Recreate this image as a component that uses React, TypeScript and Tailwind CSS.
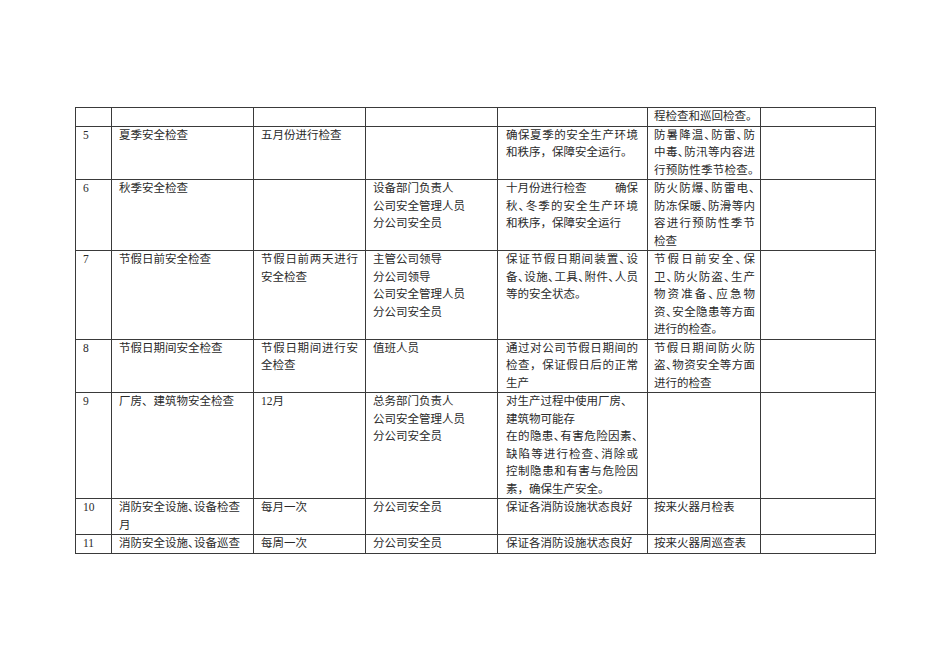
import React from "react";

type Line = { t: string; j?: boolean; split?: [string, string]; nc?: boolean };
type Cell = Line[];

function Chars({ t, compress }: { t: string; compress: boolean }) {
  return (
    <>
      {[...t].map((c, i) =>
        compress && c === "、" ? (
          <span key={i} className="tracking-[-5.5px]">
            {c}
          </span>
        ) : compress && c === "。" ? (
          <span key={i} className="tracking-[-4.5px]">
            {c}
          </span>
        ) : (
          <span key={i}>{c}</span>
        )
      )}
    </>
  );
}

function LineView({ l }: { l: Line }) {
  if (l.split) {
    return (
      <div className="flex justify-between whitespace-nowrap">
        <span>{l.split[0]}</span>
        <span>{l.split[1]}</span>
      </div>
    );
  }
  if (l.j) {
    return (
      <div className="flex justify-between whitespace-nowrap">
        <Chars t={l.t} compress={true} />
      </div>
    );
  }
  return (
    <div className="whitespace-nowrap">
      <Chars t={l.t} compress={!l.nc} />
    </div>
  );
}

const L = (t: string): Line => ({ t });
const J = (t: string): Line => ({ t, j: true });

type Row = Cell[];

const rows: Row[] = [
  [[], [], [], [], [], [L("程检查和巡回检查。")], []],
  [
    [L("5")],
    [L("夏季安全检查")],
    [L("五月份进行检查")],
    [],
    [J("确保夏季的安全生产环境"), { t: "和秩序，保障安全运行。", nc: true }],
    [J("防暑降温、防雷、防"), J("中毒、防汛等内容进"), J("行预防性季节检查。")],
    [],
  ],
  [
    [L("6")],
    [L("秋季安全检查")],
    [],
    [L("设备部门负责人"), L("公司安全管理人员"), L("分公司安全员")],
    [{ t: "", split: ["十月份进行检查", "确保"] }, J("秋、冬季的安全生产环境"), L("和秩序，保障安全运行")],
    [J("防火防爆、防雷电、"), J("防冻保暖、防滑等内"), J("容进行预防性季节"), L("检查")],
    [],
  ],
  [
    [L("7")],
    [L("节假日前安全检查")],
    [J("节假日前两天进行"), L("安全检查")],
    [L("主管公司领导"), L("分公司领导"), L("公司安全管理人员"), L("分公司安全员")],
    [J("保证节假日期间装置、设"), J("备、设施、工具、附件、人员"), { t: "等的安全状态。", nc: true }],
    [J("节假日前安全、保"), J("卫、防火防盗、生产"), J("物资准备、应急物"), J("资、安全隐患等方面"), { t: "进行的检查。", nc: true }],
    [],
  ],
  [
    [L("8")],
    [L("节假日期间安全检查")],
    [J("节假日期间进行安"), L("全检查")],
    [L("值班人员")],
    [J("通过对公司节假日期间的"), J("检查，保证假日后的正常"), L("生产")],
    [J("节假日期间防火防"), J("盗、物资安全等方面"), L("进行的检查")],
    [],
  ],
  [
    [L("9")],
    [{ t: "厂房、建筑物安全检查", nc: true }],
    [L("12月")],
    [L("总务部门负责人"), L("公司安全管理人员"), L("分公司安全员")],
    [
      { t: "对生产过程中使用厂房、", nc: true },
      L("建筑物可能存"),
      J("在的隐患、有害危险因素、"),
      J("缺陷等进行检查、消除或"),
      J("控制隐患和有害与危险因"),
      { t: "素，确保生产安全。", nc: true },
    ],
    [],
    [],
  ],
  [
    [L("10")],
    [L("消防安全设施、设备检查"), L("月")],
    [L("每月一次")],
    [L("分公司安全员")],
    [L("保证各消防设施状态良好")],
    [L("按来火器月检表")],
    [],
  ],
  [
    [L("11")],
    [L("消防安全设施、设备巡查")],
    [L("每周一次")],
    [L("分公司安全员")],
    [L("保证各消防设施状态良好")],
    [L("按来火器周巡查表")],
    [],
  ],
];

const widths = [36, 142, 112, 132, 150, 113, 115];
const pad = [
  "pl-[7px] pr-[6px]",
  "pl-[7px] pr-[6px]",
  "pl-[7px] pr-[7px]",
  "pl-[7px] pr-[7px]",
  "pl-[8px] pr-[9px]",
  "pl-[6px] pr-[5px]",
  "pl-[7px] pr-[7px]",
];

export default function App() {
  return (
    <div
      className="w-[950px] h-[672px] bg-white pl-[75px] pt-[107px] text-[#2a2a2a] text-[11.5px] leading-[17.5px]"
      style={{ fontFamily: '"Liberation Serif", "Noto Sans CJK SC", serif' }}
    >
      <table className="table-fixed border-collapse w-[800px]">
        <colgroup>
          {widths.map((w, i) => (
            <col key={i} style={{ width: w }} />
          ))}
        </colgroup>
        <tbody>
          {rows.map((r, ri) => (
            <tr key={ri}>
              {r.map((c, ci) => (
                <td key={ci} className={`border border-[#3a3a3a] align-top p-0 ${pad[ci]}`}>
                  {c.length === 0 ? (
                    <div className="h-[17.5px]" />
                  ) : (
                    c.map((l, li) => <LineView key={li} l={l} />)
                  )}
                </td>
              ))}
            </tr>
          ))}
        </tbody>
      </table>
    </div>
  );
}
